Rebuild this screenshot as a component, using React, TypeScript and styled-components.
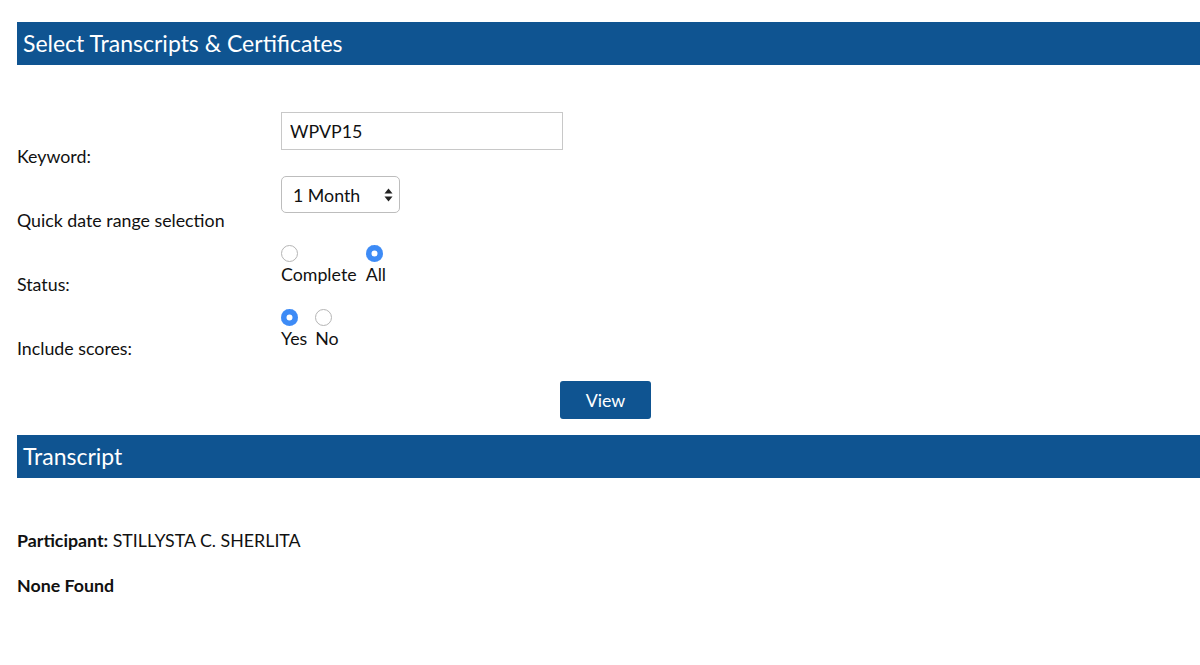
import React from "react";
import styled, { createGlobalStyle } from "styled-components";

const Global = createGlobalStyle`
  html, body { margin: 0; padding: 0; background: #fff; }
  body { font-family: Lato, "Noto Sans", "Liberation Sans", sans-serif; color: #111; }
  * { box-sizing: border-box; }
`;

const Page = styled.div`
  padding: 22px 0 0 17px;
  width: 1200px;
`;

const SectionHeader = styled.div`
  height: 43px;
  background: #0f5491;
  color: #fff;
  font-size: 23px;
  line-height: 28px;
  display: flex;
  align-items: center;
  padding: 0 0 2px 6px;
  margin-right: -20px;
`;

const Form = styled.div`
  display: grid;
  grid-template-columns: 264px 1fr;
  grid-auto-rows: 64px;
  margin-top: 39px;
`;

const Label = styled.div`
  font-size: 17.8px;
  align-self: end;
  padding-bottom: 2px;
  line-height: 20px;
`;

const Control = styled.div<{ $top: number }>`
  align-self: start;
  padding-top: ${(p) => p.$top}px;
`;

const TextInput = styled.input`
  width: 282px;
  height: 38px;
  border: 1px solid #c8c8c8;
  font-family: inherit;
  font-size: 17.8px;
  padding: 0 8px;
  color: #111;
  outline: none;
`;

const SelectBox = styled.div`
  width: 119px;
  height: 37px;
  border: 1px solid #bdbdbd;
  border-radius: 5px;
  display: flex;
  align-items: center;
  justify-content: space-between;
  padding: 0 6px 0 11px;
  font-size: 17.8px;
`;

const Options = styled.div<{ $gap: number }>`
  display: flex;
  gap: ${(p) => p.$gap}px;
`;

const Option = styled.label`
  display: flex;
  flex-direction: column;
  align-items: flex-start;
  font-size: 17.8px;
  line-height: 20px;
`;

const Radio = styled.span<{ $on?: boolean }>`
  width: 17px;
  height: 17px;
  border-radius: 50%;
  margin-bottom: 2px;
  ${(p) =>
    p.$on
      ? `background: #3d8bf6; box-shadow: inset 0 0 0 5.5px #3d8bf6, inset 0 0 0 9px #fff;`
      : `background: #fff; border: 1px solid #b5b5b5;`}
`;

const ButtonRow = styled.div`
  display: flex;
  justify-content: center;
  padding-right: 6px;
  margin-top: 21px;
  margin-bottom: 16px;
`;

const ViewButton = styled.button`
  width: 91px;
  height: 38px;
  background: #0f5491;
  color: #fff;
  border: none;
  border-radius: 3px;
  font-family: inherit;
  font-size: 17.8px;
`;

const Info = styled.p`
  font-size: 17.8px;
  margin: 0;
  line-height: 20px;
`;

const Participant = styled(Info)`
  margin-top: 52px;
`;

const NoneFound = styled(Info)`
  margin-top: 25px;
  font-weight: bold;
`;

export default function App() {
  return (
    <Page>
      <Global />
      <SectionHeader>Select Transcripts &amp; Certificates</SectionHeader>
      <Form>
        <Label>Keyword:</Label>
        <Control $top={8}>
          <TextInput defaultValue="WPVP15" />
        </Control>
        <Label>Quick date range selection</Label>
        <Control $top={8}>
          <SelectBox>
            <span>1 Month</span>
            <svg width="9" height="14" viewBox="0 0 9 14">
              <path d="M4.5 0.5 L8.5 5.5 L0.5 5.5 Z" fill="#222" />
              <path d="M4.5 13.5 L8.5 8.5 L0.5 8.5 Z" fill="#222" />
            </svg>
          </SelectBox>
        </Control>
        <Label>Status:</Label>
        <Control $top={13}>
          <Options $gap={9}>
            <Option>
              <Radio />
              Complete
            </Option>
            <Option>
              <Radio $on />
              All
            </Option>
          </Options>
        </Control>
        <Label>Include scores:</Label>
        <Control $top={13}>
          <Options $gap={8}>
            <Option>
              <Radio $on />
              Yes
            </Option>
            <Option>
              <Radio />
              No
            </Option>
          </Options>
        </Control>
      </Form>
      <ButtonRow>
        <ViewButton>View</ViewButton>
      </ButtonRow>
      <SectionHeader>Transcript</SectionHeader>
      <Participant>
        <b>Participant:</b> STILLYSTA C. SHERLITA
      </Participant>
      <NoneFound>None Found</NoneFound>
    </Page>
  );
}
